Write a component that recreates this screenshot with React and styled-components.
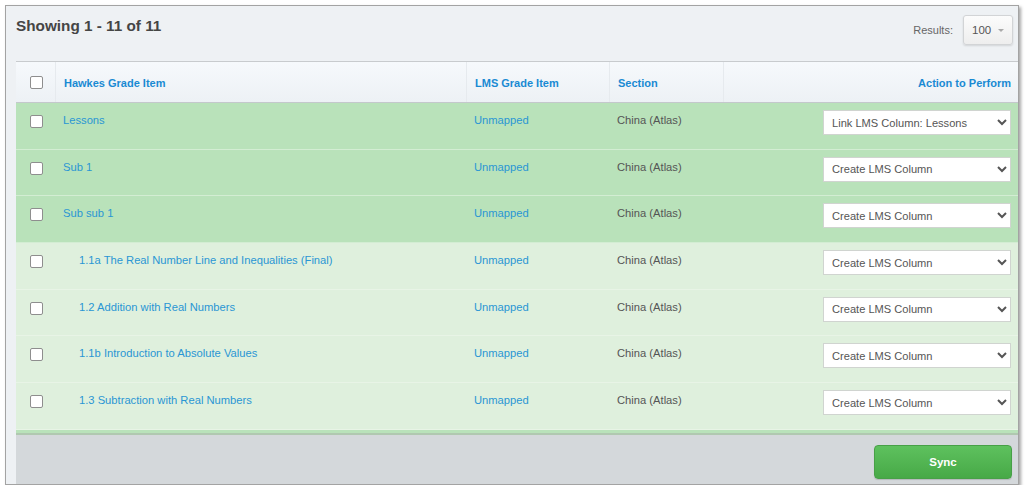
import React from 'react';
import styled, { createGlobalStyle } from 'styled-components';

const GlobalStyle = createGlobalStyle`
  html, body {
    margin: 0;
    padding: 0;
    background: #ffffff;
    font-family: "Liberation Sans", Arial, sans-serif;
  }
`;

const Frame = styled.div`
  margin: 5px 0 0 5px;
  width: 1002px;
  height: 478px;
  border: 1px solid #a3a3a3;
  box-shadow: 2px 2px 3px rgba(0, 0, 0, 0.35);
  background: #eef1f4;
  padding-left: 10px;
  display: flex;
  flex-direction: column;
  box-sizing: content-box;
  overflow: hidden;
`;

const TopBar = styled.div`
  height: 55px;
  display: flex;
  align-items: flex-start;
  justify-content: space-between;
  box-sizing: border-box;
  padding-top: 10px;
`;

const Title = styled.h2`
  margin: 0;
  font-size: 15.3px;
  font-weight: bold;
  color: #454545;
  line-height: 20px;
`;

const Results = styled.div`
  display: flex;
  align-items: center;
  gap: 10px;
  margin-right: 5px;
  font-size: 11px;
  color: #666;
  margin-top: -1px;
`;

const PageSize = styled.div`
  width: 50px;
  height: 30px;
  box-sizing: border-box;
  border: 1px solid #d2d4d6;
  border-radius: 3px;
  background: linear-gradient(#fcfcfc, #eeeeee);
  box-shadow: 0 1px 2px rgba(0, 0, 0, 0.12);
  display: flex;
  align-items: center;
  justify-content: space-between;
  padding: 0 8px 0 8px;
  font-size: 11.5px;
  color: #555;
`;

const Caret = styled.span`
  width: 0;
  height: 0;
  border-left: 3px solid transparent;
  border-right: 3px solid transparent;
  border-top: 3px solid #aaa;
`;

const TableWrap = styled.div`
  flex: 1;
  display: flex;
  flex-direction: column;
  border-top: 1px solid #c8cbce;
`;

const Row = styled.div`
  display: grid;
  grid-template-columns: 39px 411px 143px 114px 294px;
  box-sizing: border-box;
`;

const HeaderRow = styled(Row)`
  height: 41px;
  background: linear-gradient(#f6f9fc, #edf1f5);
  border-bottom: 1px solid #c4c8cc;
`;

const HeadCell = styled.div`
  display: flex;
  align-items: center;
  justify-content: ${p => (p.$right ? 'flex-end' : 'flex-start')};
  padding: 1px ${p => (p.$right ? '6px' : '8px')} 0 8px;
  font-size: 11px;
  font-weight: bold;
  color: #1a8ad3;
  border-left: ${p => (p.$first ? 'none' : '1px solid #e6eaee')};
`;

const Body = styled.div`
  height: 330px;
  overflow: hidden;
`;

const BodyRow = styled(Row)`
  height: 46.7px;
  background: ${p => (p.$dark ? '#b9e2ba' : '#dff0dd')};
  border-bottom: 1px solid ${p => (p.$dark ? '#d3edd3' : '#e8f4e6')};
`;

const Cell = styled.div`
  padding: 10px 8px 0 8px;
  font-size: 11.2px;
  line-height: 14px;
  color: ${p => (p.$muted ? '#555' : '#2a96d4')};
`;

const CheckCell = styled.div`
  display: flex;
  justify-content: center;
  align-items: ${p => (p.$head ? 'center' : 'flex-start')};
  padding-top: ${p => (p.$head ? '0' : '12px')};
  padding-left: 2px;
`;

const Check = styled.span`
  width: 11px;
  height: 11px;
  border: 1px solid #8e8e8e;
  border-radius: 2px;
  background: #fff;
`;

const LinkText = styled.span`
  padding-left: ${p => (p.$indent ? '16px' : '0')};
`;

const ActionCell = styled.div`
  display: flex;
  justify-content: flex-end;
  padding: 7px 6px 0 0;
`;

const Select = styled.select`
  width: 188px;
  height: 25px;
  box-sizing: border-box;
  border: 1px solid #d0d4d0;
  border-radius: 0;
  background: #fff;
  font-family: "Liberation Sans", Arial, sans-serif;
  font-size: 11.1px;
  color: #555;
  padding: 0 4px;
`;

const Footer = styled.div`
  flex: 1;
  background: #d4d8db;
  border-top: 2px solid #b0c8b0;
  display: flex;
  justify-content: flex-end;
  align-items: flex-start;
  padding: 10px 6px 0 0;
`;

const SyncButton = styled.button`
  width: 138px;
  height: 34px;
  border: 1px solid #47a047;
  border-radius: 4px;
  background: linear-gradient(#5ec15e, #47a947);
  color: #fff;
  font-family: "Liberation Sans", Arial, sans-serif;
  font-size: 11.5px;
  font-weight: bold;
  box-shadow: 0 1px 1px rgba(0, 0, 0, 0.15);
`;

const rows = [
  { name: 'Lessons', dark: true, action: 'Link LMS Column: Lessons' },
  { name: 'Sub 1', dark: true, action: 'Create LMS Column' },
  { name: 'Sub sub 1', dark: true, action: 'Create LMS Column' },
  { name: '1.1a The Real Number Line and Inequalities (Final)', indent: true, action: 'Create LMS Column' },
  { name: '1.2 Addition with Real Numbers', indent: true, action: 'Create LMS Column' },
  { name: '1.1b Introduction to Absolute Values', indent: true, action: 'Create LMS Column' },
  { name: '1.3 Subtraction with Real Numbers', indent: true, action: 'Create LMS Column' },
];

const App = () => {
  return (
    <>
      <GlobalStyle />
      <Frame>
        <TopBar>
          <Title>Showing 1 - 11 of 11</Title>
          <Results>
            Results:
            <PageSize>
              100
              <Caret />
            </PageSize>
          </Results>
        </TopBar>
        <TableWrap>
          <HeaderRow>
            <CheckCell $head>
              <Check />
            </CheckCell>
            <HeadCell>Hawkes Grade Item</HeadCell>
            <HeadCell>LMS Grade Item</HeadCell>
            <HeadCell>Section</HeadCell>
            <HeadCell $right>Action to Perform</HeadCell>
          </HeaderRow>
          <Body>
            {rows.map((row, i) => (
              <BodyRow key={i} $dark={row.dark}>
                <CheckCell>
                  <Check />
                </CheckCell>
                <Cell>
                  <LinkText $indent={row.indent}>{row.name}</LinkText>
                </Cell>
                <Cell>Unmapped</Cell>
                <Cell $muted>China (Atlas)</Cell>
                <ActionCell>
                  <Select defaultValue={row.action}>
                    <option>{row.action}</option>
                  </Select>
                </ActionCell>
              </BodyRow>
            ))}
            {/* next row, scrolled just out of view */}
            <BodyRow $dark />
          </Body>
          <Footer>
            <SyncButton>Sync</SyncButton>
          </Footer>
        </TableWrap>
      </Frame>
    </>
  );
};

export default App;
